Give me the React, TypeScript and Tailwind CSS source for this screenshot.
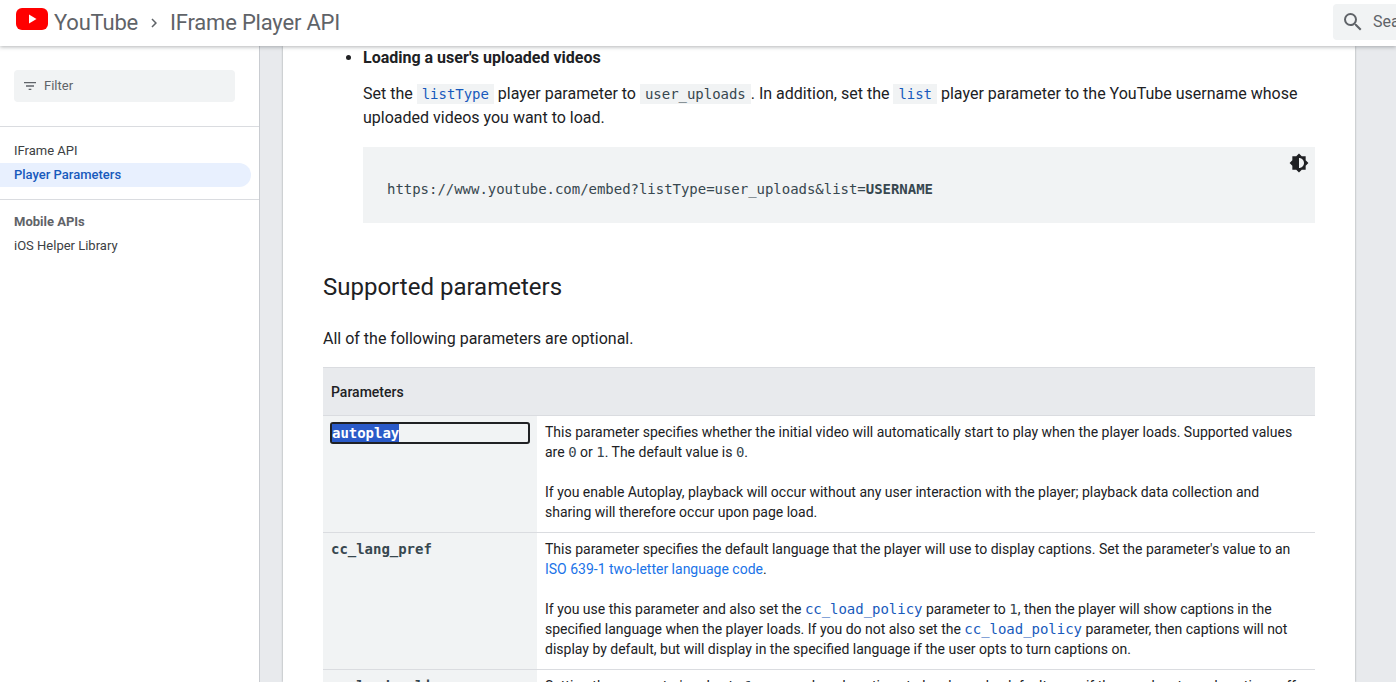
const mono = 'font-["DejaVu_Sans_Mono","Liberation_Mono",monospace]';

function CodeChip({ children, link }: { children: React.ReactNode; link?: boolean }) {
  return (
    <code
      className={`font-["DejaVu_Sans_Mono","Liberation_Mono",monospace] text-[14px] font-medium tracking-[-0.03px] bg-[#f1f3f4] px-[5px] py-[2px] ${
        link ? 'text-[#185abc]' : 'text-[#37474f]'
      }`}
    >
      {children}
    </code>
  );
}

function TableCode({ children, link }: { children: React.ReactNode; link?: boolean }) {
  return (
    <code
      className={`font-["DejaVu_Sans_Mono","Liberation_Mono",monospace] text-[14px] font-medium tracking-[-0.03px] ${
        link ? 'text-[#185abc]' : 'text-[#37474f]'
      }`}
    >
      {children}
    </code>
  );
}

function Header() {
  return (
    <header className="relative z-10 h-[46px] shrink-0 flex items-center bg-white shadow-[0_1px_4px_rgba(60,64,67,0.4)] overflow-hidden">
      <svg className="ml-[16px] mb-[8px] shrink-0" width="32" height="22" viewBox="0 0 32 22">
        <rect width="32" height="22" rx="6" fill="#ff0000" />
        <path d="M13 6.5v9l7.5-4.5z" fill="#fff" />
      </svg>
      <span className="ml-[6px] mb-[1px] text-[22px] text-[#5f6368] tracking-[-0.2px]">YouTube</span>
      <svg className="ml-[7px] shrink-0" width="18" height="18" viewBox="0 0 24 24" fill="#5f6368">
        <path d="M8.6 16.6 13.2 12 8.6 7.4 10 6l6 6-6 6z" />
      </svg>
      <span className="ml-[7px] mb-[1px] text-[22px] text-[#5f6368] tracking-[-0.2px] whitespace-nowrap">IFrame Player API</span>
      <div className="ml-auto mr-[-137px] mb-[3px] w-[200px] shrink-0 h-[36px] rounded-[4px] bg-[#f1f3f4] flex items-center pl-[8px] gap-[8px]">
        <svg width="24" height="24" viewBox="0 0 24 24" fill="#5f6368">
          <path d="M15.5 14h-.79l-.28-.27A6.47 6.47 0 0 0 16 9.5 6.5 6.5 0 1 0 9.5 16c1.61 0 3.09-.59 4.23-1.57l.27.28v.79l5 4.99L20.49 19l-4.99-5zm-6 0C7.01 14 5 11.99 5 9.5S7.01 5 9.5 5 14 7.01 14 9.5 11.99 14 9.5 14z" />
        </svg>
        <span className="text-[16px] text-[#5f6368]">Search</span>
      </div>
    </header>
  );
}

function Sidebar() {
  return (
    <aside className="w-[260px] shrink-0 bg-white border-r border-[#c9ccd1] text-[13px] leading-[24px] text-[#3c4043]">
      <div className="pt-[24px] pl-[14px] pr-[24px] pb-[24px] border-b border-[#dadce0]">
        <div className="h-[32px] rounded-[4px] bg-[#f1f3f4] flex items-center pl-[8px] gap-[6px] text-[#5f6368]">
          <svg width="16" height="16" viewBox="0 0 24 24" fill="#5f6368">
            <path d="M10 18h4v-2h-4v2zM3 6v2h18V6H3zm3 7h12v-2H6v2z" />
          </svg>
          <span>Filter</span>
        </div>
      </div>
      <div className="pt-[12px] pb-[12px] border-b border-[#dadce0]">
        <div className="pl-[14px]">IFrame API</div>
        <div className="pl-[14px] mr-[8px] rounded-r-full bg-[#e8f0fe] text-[#185abc] font-medium">Player Parameters</div>
      </div>
      <div className="pt-[10px]">
        <div className="pl-[14px] font-bold text-[#5f6368]">Mobile APIs</div>
        <div className="pl-[14px]">iOS Helper Library</div>
      </div>
    </aside>
  );
}

function Article() {
  return (
    <article className="w-[1072px] h-full overflow-hidden bg-white px-[40px] shadow-[0_0_2px_rgba(60,64,67,0.45)] text-[16px] leading-[24px] text-[#202124]">
      <ul className="list-disc pl-[40px]">
        <li>
          <strong className="font-bold">Loading a user's uploaded videos</strong>
          <p className="mt-[12px]">
            Set the <CodeChip link>listType</CodeChip> player parameter to <CodeChip>user_uploads</CodeChip>. In addition, set the{' '}
            <CodeChip link>list</CodeChip> player parameter to the YouTube username whose uploaded videos you want to load.
          </p>
          <div className="relative mt-[17px] h-[76px] bg-[#f1f3f4] pl-[24px] pt-[30px] text-[#37474f]">
            <pre className={`${mono} text-[14px] leading-[24px] tracking-[-0.03px]`}>
              https://www.youtube.com/embed?listType=user_uploads&amp;list=<b className="font-bold">USERNAME</b>
            </pre>
            <svg className="absolute right-[6px] top-[6px]" width="20" height="20" viewBox="0 0 24 24" fill="#202124">
              <path d="M20 15.31 23.31 12 20 8.69V4h-4.69L12 .69 8.69 4H4v4.69L.69 12 4 15.31V20h4.69L12 23.31 15.31 20H20v-4.69zM12 18V6c3.31 0 6 2.69 6 6s-2.69 6-6 6z" />
            </svg>
          </div>
        </li>
      </ul>
      <h2 className="mt-[48px] text-[24px] leading-[32px] font-normal">Supported parameters</h2>
      <p className="mt-[24px]">All of the following parameters are optional.</p>
      <table className="mt-[16px] w-[992px] table-fixed border-collapse text-[14px] leading-[20px]">
        <colgroup>
          <col className="w-[214px]" />
          <col />
        </colgroup>
        <thead>
          <tr className="h-[48px] bg-[#e8eaed] border-y border-[#dadce0]">
            <th colSpan={2} className="text-left font-medium px-[8px]">Parameters</th>
          </tr>
        </thead>
        <tbody>
          <tr className="border-b border-[#dadce0]">
            <td className="align-top bg-[#f1f3f4] p-[6px_7px_8px_7px]">
              <div className="h-[22px] w-[200px] rounded-[3px] border-2 border-[#202124] flex items-center">
                <span className={`${mono} font-bold text-[14px] tracking-[-0.03px] leading-[18px] bg-[#2a5ac8] text-white`}>autoplay</span>
              </div>
            </td>
            <td className="align-top p-[6px_8px_10px_8px]">
              <p>
                This parameter specifies whether the initial video will automatically start to play when the player loads. Supported values are <TableCode>0</TableCode> or <TableCode>1</TableCode>. The default value is <TableCode>0</TableCode>.
              </p>
              <p className="mt-[20px]">
                If you enable Autoplay, playback will occur without any user interaction with the player; playback data collection and sharing will therefore occur upon page load.
              </p>
            </td>
          </tr>
          <tr className="border-b border-[#dadce0]">
            <td className="align-top bg-[#f1f3f4] px-[8px] pt-[6px]">
              <span className={`${mono} font-bold tracking-[-0.03px] text-[#37474f]`}>cc_lang_pref</span>
            </td>
            <td className="align-top p-[6px_8px_10px_8px]">
              <p>
                This parameter specifies the default language that the player will use to display captions. Set the parameter's value to an <span className="text-[#1a73e8]">ISO 639-1 two-letter language code</span>.
              </p>
              <p className="mt-[20px]">
                If you use this parameter and also set the <TableCode link>cc_load_policy</TableCode> parameter to <TableCode>1</TableCode>, then the player will show captions in the specified language when the player loads. If you do not also set the <TableCode link>cc_load_policy</TableCode> parameter, then captions will not display by default, but will display in the specified language if the user opts to turn captions on.
              </p>
            </td>
          </tr>
          <tr>
            <td className="align-top bg-[#f1f3f4] px-[8px] pt-[6px]">
              <span className={`${mono} font-bold tracking-[-0.03px] text-[#37474f]`}>cc_load_policy</span>
            </td>
            <td className="align-top p-[6px_8px_10px_8px]">
              <p>
                Setting the parameter's value to <TableCode>1</TableCode> causes closed captions to be shown by default, even if the user has turned captions off.
              </p>
            </td>
          </tr>
        </tbody>
      </table>
    </article>
  );
}

export default function App() {
  return (
    <div className='h-[682px] overflow-hidden flex flex-col bg-[#e8eaed] font-["Roboto","Liberation_Sans",sans-serif]'>
      <Header />
      <div className="flex flex-1 min-h-0">
        <Sidebar />
        <div className="pl-[23px]">
          <Article />
        </div>
      </div>
    </div>
  );
}
